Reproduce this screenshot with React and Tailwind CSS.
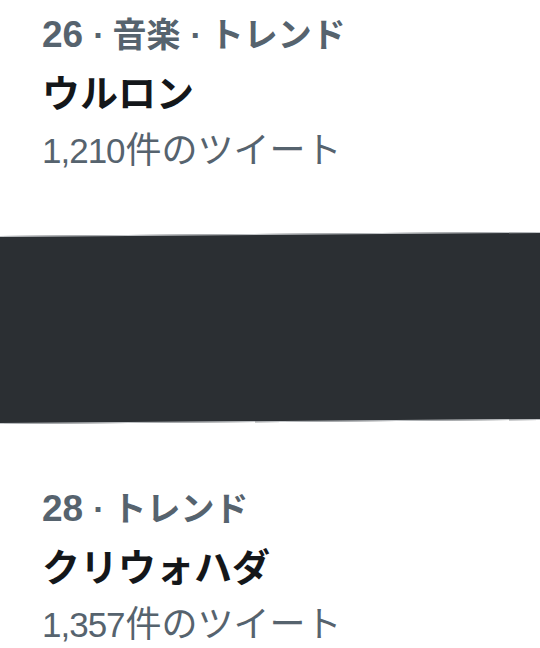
export default function App() {
  const font = { fontFamily: '"Liberation Sans", "Noto Sans CJK JP", sans-serif' };
  const Meta = ({ num, parts }) => (
    <>
      <span className="text-[37px]">{num}</span>
      {parts.map((p, i) => (
        <span key={i}>
          <span className="ml-[10px] mr-[8px]">·</span>
          <span>{p}</span>
        </span>
      ))}
    </>
  );
  const Count = ({ num, rest }) => (
    <>
      <span className="text-[35px] tracking-[-1px] mr-[1px]">{num}</span>
      <span>{rest}</span>
    </>
  );
  const Trend = ({ num, parts, name, count }) => (
    <div className="pl-[42px] flex flex-col" style={font}>
      <div className="h-[58px] flex items-end pb-[9px] text-[34px] leading-none font-bold text-[#56636e] whitespace-nowrap">
        <div className="leading-none">
          <Meta num={num} parts={parts} />
        </div>
      </div>
      <div className="h-[58px] flex items-end pb-[7px] text-[38px] leading-none font-bold text-[#14171a] whitespace-nowrap">
        {name}
      </div>
      <div className="h-[58px] flex items-end pb-[9px] text-[36px] leading-none text-[#56636e] whitespace-nowrap">
        <div className="leading-none">
          <Count num={count} rest="件のツイート" />
        </div>
      </div>
    </div>
  );
  return (
    <div className="w-[540px] h-[648px] bg-white overflow-hidden flex flex-col">
      <div className="pt-[4px]">
        <Trend num="26" parts={["音楽", "トレンド"]} name="ウルロン" count="1,210" />
      </div>
      <div className="mt-[56px] -mx-[10px] h-[188px] shrink-0 bg-[#2b2f33] border-y-[1.5px] border-[#c4c7ca] -rotate-[0.45deg]" />
      <div className="mt-[56px]">
        <Trend num="28" parts={["トレンド"]} name="クリウォハダ" count="1,357" />
      </div>
    </div>
  );
}
